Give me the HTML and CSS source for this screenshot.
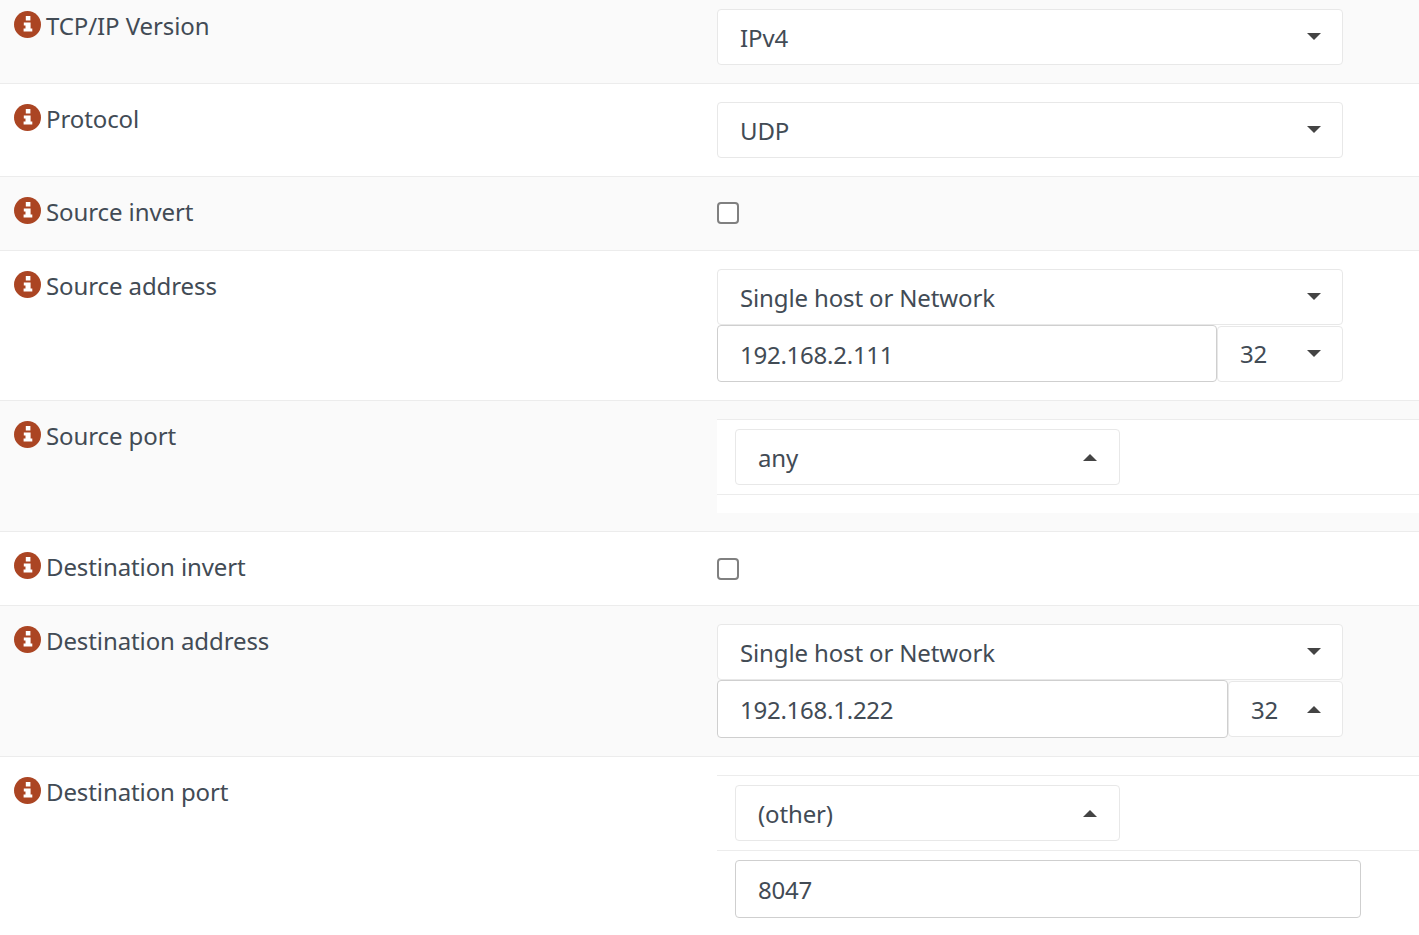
FILE: index.html
```html
<!DOCTYPE html>
<html lang="en">
<head>
<meta charset="utf-8">
<title>Firewall rule</title>
<link rel="stylesheet" href="styles.css">
</head>
<body>
<svg class="defs" width="0" height="0" aria-hidden="true">
  <symbol id="info" viewBox="0 0 27 27">
    <circle cx="13.5" cy="13.5" r="13.5" fill="#ab4523"/>
    <path fill="#fff" d="M11.8 5h4.6v4.6h-4.6zM9.8 11.4h6.8v6.2h1.7v3H9.6v-3h1.9v-3.1H9.8z"/>
  </symbol>
</svg>
<main class="form">
  <div class="row odd first">
    <div class="label"><svg class="info"><use href="#info"/></svg><span>TCP/IP Version</span></div>
    <div class="control"><div class="select full"><span>IPv4</span><i class="caret"></i></div></div>
  </div>
  <div class="row">
    <div class="label"><svg class="info"><use href="#info"/></svg><span>Protocol</span></div>
    <div class="control"><div class="select full"><span>UDP</span><i class="caret"></i></div></div>
  </div>
  <div class="row odd">
    <div class="label"><svg class="info"><use href="#info"/></svg><span>Source invert</span></div>
    <div class="control check-cell"><span class="check"></span></div>
  </div>
  <div class="row">
    <div class="label"><svg class="info"><use href="#info"/></svg><span>Source address</span></div>
    <div class="control">
      <div class="select full"><span>Single host or Network</span><i class="caret"></i></div>
      <div class="group">
        <div class="input grow"><span>192.168.2.111</span></div>
        <div class="select mask-a"><span>32</span><i class="caret"></i></div>
      </div>
    </div>
  </div>
  <div class="row odd">
    <div class="label"><svg class="info"><use href="#info"/></svg><span>Source port</span></div>
    <div class="control nested">
      <div class="cell"><div class="select port"><span>any</span><i class="caret up"></i></div></div>
      <div class="cell empty"></div>
    </div>
  </div>
  <div class="row">
    <div class="label"><svg class="info"><use href="#info"/></svg><span>Destination invert</span></div>
    <div class="control check-cell low"><span class="check"></span></div>
  </div>
  <div class="row odd">
    <div class="label"><svg class="info"><use href="#info"/></svg><span>Destination address</span></div>
    <div class="control">
      <div class="select full"><span>Single host or Network</span><i class="caret"></i></div>
      <div class="group">
        <div class="input grow tall"><span>192.168.1.222</span></div>
        <div class="select mask-b"><span>32</span><i class="caret up"></i></div>
      </div>
    </div>
  </div>
  <div class="row last">
    <div class="label"><svg class="info"><use href="#info"/></svg><span>Destination port</span></div>
    <div class="control nested">
      <div class="cell"><div class="select port"><span>(other)</span><i class="caret up"></i></div></div>
      <div class="cell"><div class="input wide"><span>8047</span></div></div>
    </div>
  </div>
</main>
</body>
</html>
```
FILE: styles.css
```css
* { box-sizing: border-box; }
html, body { margin: 0; height: 935px; overflow: hidden; background: #fff; }
body { font-family: "Noto Sans", "Open Sans", sans-serif; font-size: 24px; color: #424b55; }
.defs { position: absolute; }
.form { display: flex; flex-direction: column; }
.row { display: flex; padding: 18px 0; border-bottom: 1px solid #ececec; background: #fff; }
.row.odd { background: #fafafa; }
.row.first { padding-top: 9px; }
.row.last { border-bottom: 0; padding-bottom: 17px; }
.label { width: 717px; flex: none; display: flex; align-items: flex-start; gap: 5px; padding: 2px 0 0 14px; line-height: 30px; height: 33px; letter-spacing: -0.1px; }
.info { width: 27px; height: 27px; flex: none; }
.control { width: 626px; flex: none; }
.select, .input { display: flex; align-items: center; height: 56px; padding: 0 22px; background: #fff; border: 1px solid #e8e8e8; border-radius: 4px; letter-spacing: -0.14px; }
.select { justify-content: space-between; padding-right: 21px; }
.caret { width: 0; height: 0; border-left: 7px solid transparent; border-right: 7px solid transparent; border-top: 7px solid #444; margin-top: -1px; }
.caret.up { border-top: 0; border-bottom: 7px solid #444; margin-top: 0; }
.group { display: flex; align-items: center; }
.input { border-color: #cfcfcf; height: 57px; padding-top: 1px; letter-spacing: -0.25px; }
.input.tall { height: 58px; }
.grow { flex: 1; min-width: 0; }
.mask-a { width: 126px; flex: none; }
.mask-b { width: 115px; flex: none; }
.check-cell { height: 37px; padding-top: 7px; }
.check-cell.low { padding-top: 8px; }
.check { display: block; width: 22px; height: 22px; background: #fff; border: 2px solid #808080; border-radius: 4px; }
.nested { width: 702px; background: #fff; }
.cell { padding: 9px 18px; border-top: 1px solid #ececec; }
.cell.empty { height: 19px; padding: 0; }
.port { width: 385px; padding-right: 22px; }
.wide { width: 626px; height: 58px; }
```
